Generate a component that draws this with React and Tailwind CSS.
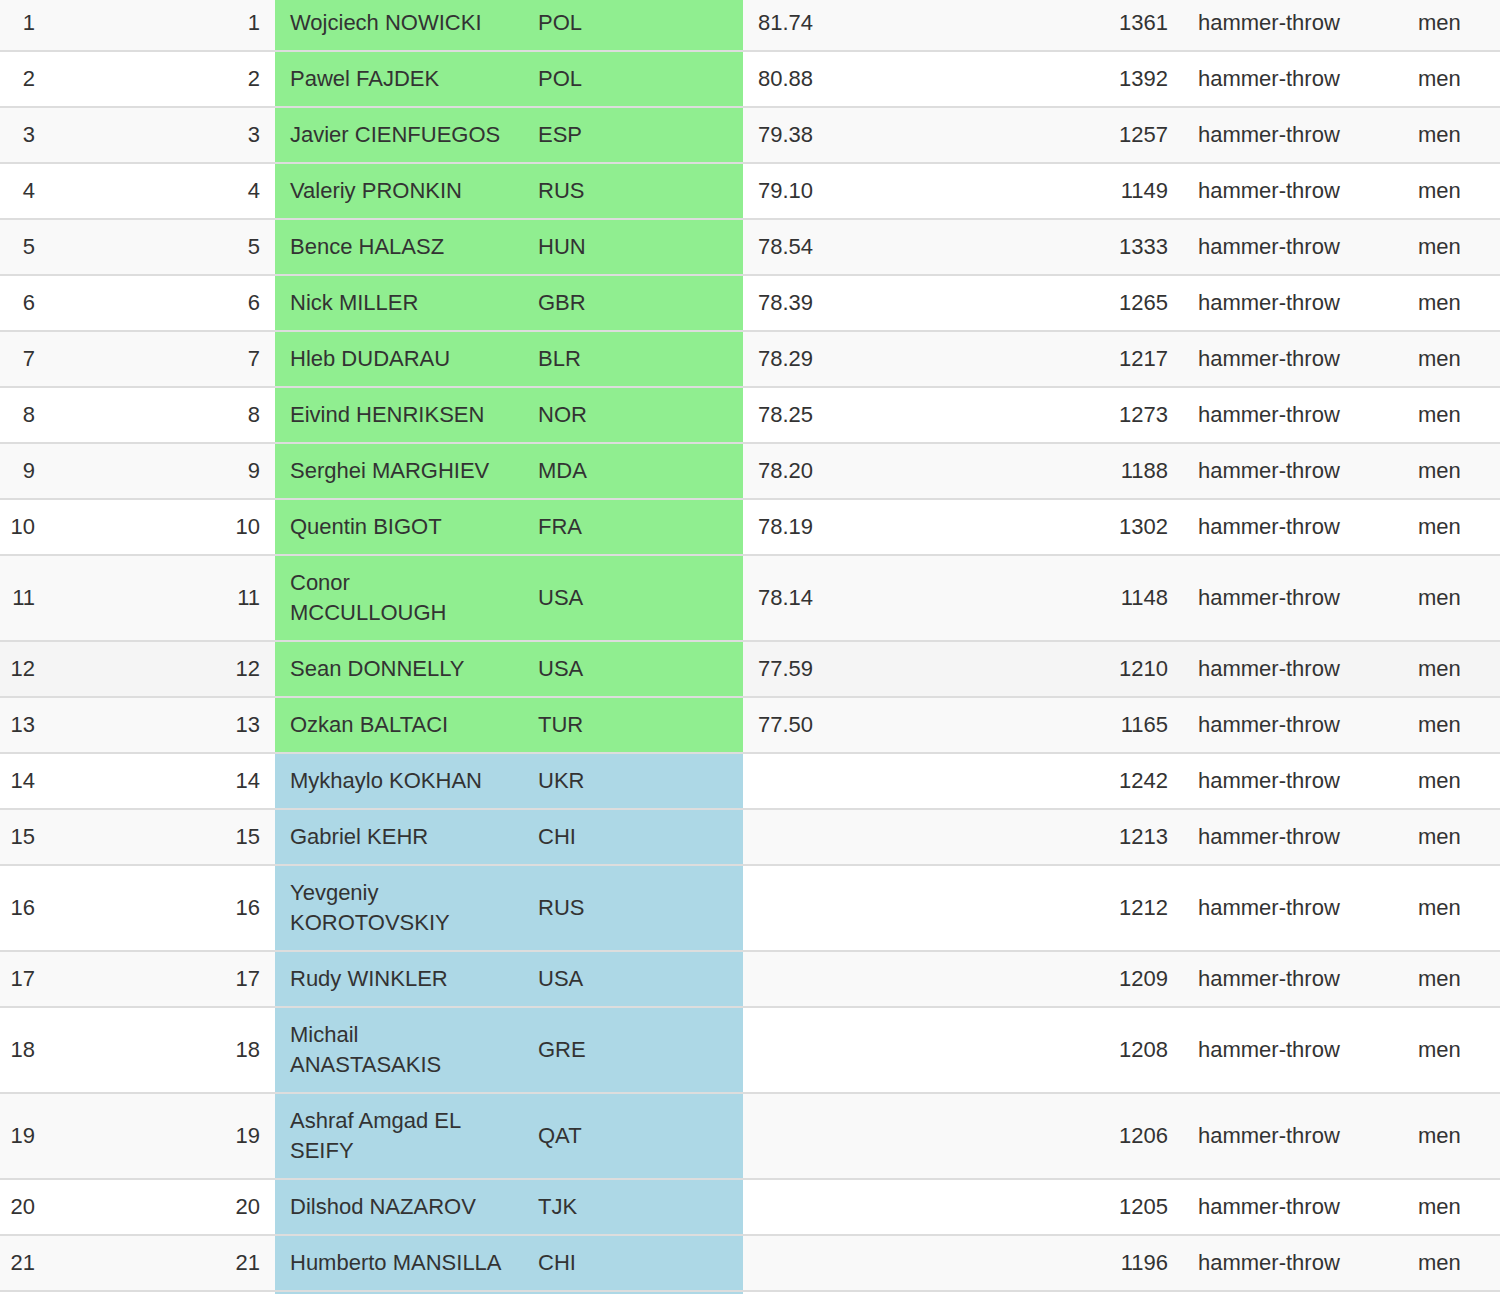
import React from 'react';

const rows = [
  [1, 'Wojciech NOWICKI', 'POL', '81.74', 1361],
  [2, 'Pawel FAJDEK', 'POL', '80.88', 1392],
  [3, 'Javier CIENFUEGOS', 'ESP', '79.38', 1257],
  [4, 'Valeriy PRONKIN', 'RUS', '79.10', 1149],
  [5, 'Bence HALASZ', 'HUN', '78.54', 1333],
  [6, 'Nick MILLER', 'GBR', '78.39', 1265],
  [7, 'Hleb DUDARAU', 'BLR', '78.29', 1217],
  [8, 'Eivind HENRIKSEN', 'NOR', '78.25', 1273],
  [9, 'Serghei MARGHIEV', 'MDA', '78.20', 1188],
  [10, 'Quentin BIGOT', 'FRA', '78.19', 1302],
  [11, 'Conor\nMCCULLOUGH', 'USA', '78.14', 1148],
  [12, 'Sean DONNELLY', 'USA', '77.59', 1210],
  [13, 'Ozkan BALTACI', 'TUR', '77.50', 1165],
  [14, 'Mykhaylo KOKHAN', 'UKR', '', 1242],
  [15, 'Gabriel KEHR', 'CHI', '', 1213],
  [16, 'Yevgeniy\nKOROTOVSKIY', 'RUS', '', 1212],
  [17, 'Rudy WINKLER', 'USA', '', 1209],
  [18, 'Michail\nANASTASAKIS', 'GRE', '', 1208],
  [19, 'Ashraf Amgad EL\nSEIFY', 'QAT', '', 1206],
  [20, 'Dilshod NAZAROV', 'TJK', '', 1205],
  [21, 'Humberto MANSILLA', 'CHI', '', 1196],
];

const td = 'border-t-2 border-[#ddd] px-[15px] py-3 align-middle';

const App = () => {
  return (
    <div className="h-[1294px] overflow-hidden bg-white text-[#333] text-[22px] leading-[30px] font-['Liberation_Sans',Arial,sans-serif]">
      <table className="-mt-[6px] w-[1500px] table-fixed border-collapse">
        <colgroup>
          <col className="w-[50px]" />
          <col className="w-[225px]" />
          <col className="w-[248px]" />
          <col className="w-[220px]" />
          <col className="w-[257px]" />
          <col className="w-[183px]" />
          <col className="w-[220px]" />
          <col className="w-[97px]" />
        </colgroup>
        <tbody>
          {rows.map(([i, name, nat, mark, pts]) => {
            const qualified = mark !== '';
            const cellBg = qualified ? 'bg-[#90ee90]' : 'bg-[#add8e6]';
            const rowBg = i === 12 ? 'bg-[#f5f5f5]' : i % 2 === 1 ? 'bg-[#f9f9f9]' : 'bg-white';
            return (
              <tr key={i} className={rowBg}>
                <td className={`${td} text-right !px-0 !pr-[15px]`}>{i}</td>
                <td className={`${td} text-right`}>{i}</td>
                <td className={`${td} ${cellBg} whitespace-pre-line`}>{name}</td>
                <td className={`${td} ${cellBg}`}>{nat}</td>
                <td className={td}>{mark}</td>
                <td className={`${td} text-right`}>{pts}</td>
                <td className={td}>hammer-throw</td>
                <td className={td}>men</td>
              </tr>
            );
          })}
          <tr className="bg-white">
            <td className={td}>&nbsp;</td>
            <td className={td}></td>
            <td className={`${td} bg-[#add8e6]`}></td>
            <td className={`${td} bg-[#add8e6]`}></td>
            <td className={td}></td>
            <td className={td}></td>
            <td className={td}></td>
            <td className={td}></td>
          </tr>
        </tbody>
      </table>
    </div>
  );
};

export default App;
